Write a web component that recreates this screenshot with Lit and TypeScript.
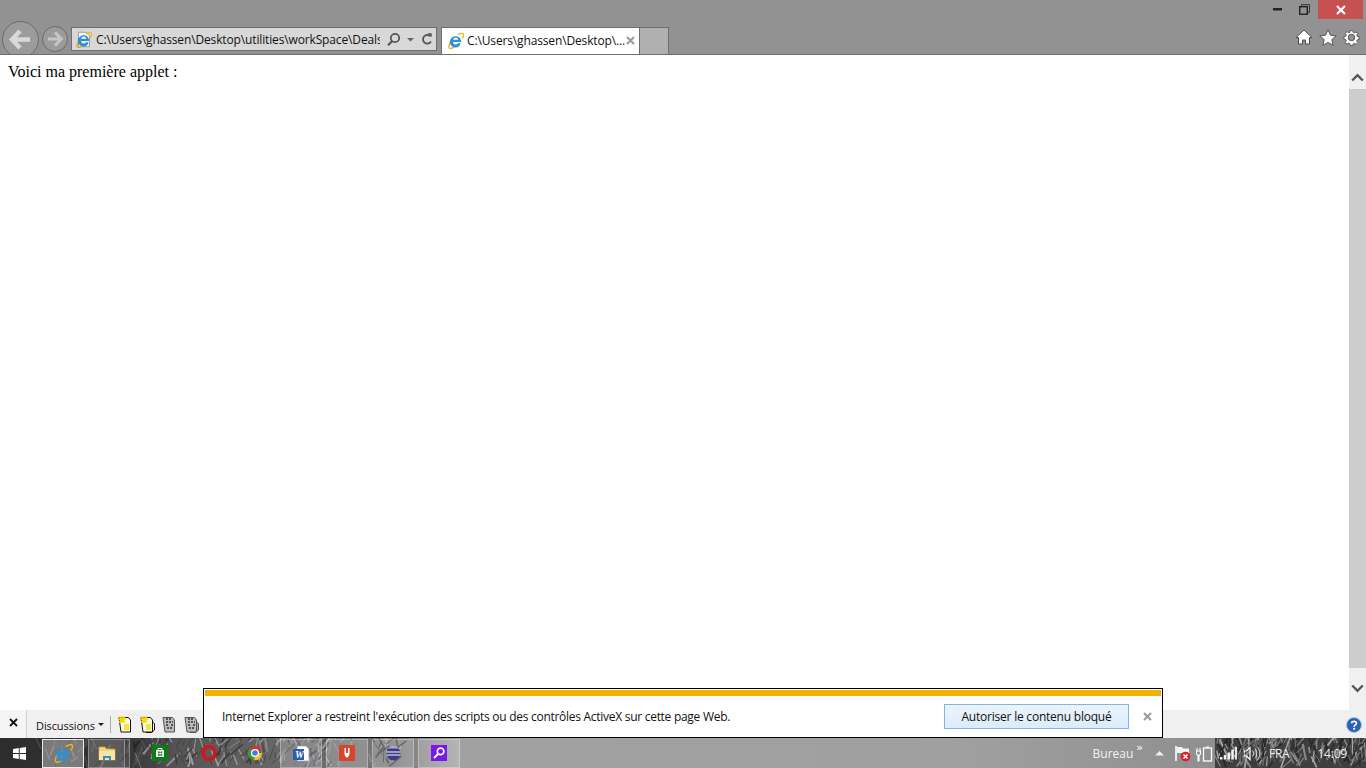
import { LitElement, html, css, svg } from "lit";
import { customElement } from "lit/decorators.js";

const ieLogo = (s: number, docBack = false) => html`<svg width=${s} height=${s} viewBox="0 0 20 20" class="ico">
  ${docBack ? svg`<path d="M4 1.5h9l4 4v13H4z" fill="#fff" stroke="#8a8a8a"/>` : ""}
  <path d="M4.2 11.5C2 15.5 1.4 18.6 3.4 19.2c1.9.5 4.6-1 6.8-3" fill="none" stroke="#f2a81c" stroke-width="1.5"/>
  <path d="M12.6 3.4c3-1.8 6-2.5 6.8-1 .6 1.3-.2 3.2-1.6 5.1" fill="none" stroke="#f2b51c" stroke-width="1.5"/>
  <path d="M16 13.2h-3.4c-.7 1.7-3.6 1.9-4.7.5-.5-.6-.7-1.1-.7-1.9H16.6c.2-3.7-2.5-6.9-6.2-6.9-4 0-7 3-7 6.9 0 3.7 3 6.4 6.7 6.4 3 0 5.2-1.7 5.9-5zM7.3 9c.3-1.5 1.5-2.4 3-2.4s2.7 1 2.9 2.4z" fill="#2c8fd8"/>
</svg>`;

const seeded = (seed: number) => () => (seed = (seed * 16807) % 2147483647) / 2147483647;

function strokes(x0: number, x1: number, n: number, seed: number, colors: string[], maxLen: number) {
  const r = seeded(seed);
  const out: unknown[] = [];
  for (let i = 0; i < n; i++) {
    const x = x0 + r() * (x1 - x0);
    const y = r() * 30;
    const a = -0.6 - r() * 1.6;
    const l = 6 + r() * maxLen;
    out.push(svg`<line x1=${x} y1=${y} x2=${x + Math.cos(a) * l} y2=${y + Math.sin(a) * l} stroke=${colors[Math.floor(r() * colors.length)]} stroke-width=${0.6 + r() * 1.4}/>`);
  }
  return out;
}

const taskTexture = html`<svg class="texture" width="1366" height="30" viewBox="0 0 1366 30">
  <defs>
    <linearGradient id="tb" x1="0" x2="1" y1="0" y2="0">
      <stop offset="0" stop-color="#2d2d2d"/>
      <stop offset="0.09" stop-color="#333"/>
      <stop offset="0.13" stop-color="#555"/>
      <stop offset="0.2" stop-color="#666"/>
      <stop offset="0.29" stop-color="#7a7a7a"/>
      <stop offset="0.335" stop-color="#a1a1a1"/>
      <stop offset="0.7" stop-color="#a0a0a0"/>
      <stop offset="0.89" stop-color="#8f8f8f"/>
    </linearGradient>
  </defs>
  <rect width="1366" height="30" fill="url(#tb)"/>
  ${strokes(40, 140, 40, 11, ["#4a4a4a", "#555", "#222"], 14)}
  ${strokes(135, 400, 190, 29, ["#8d8d8d", "#3c3c3c", "#9c9c9c", "#4c4c4c"], 14)}
  <rect x="1215" width="151" height="30" fill="#3f3f3f"/>
  ${strokes(1217, 1366, 210, 47, ["#8a8a8a", "#6d6d6d", "#272727", "#a5a5a5"], 12)}
</svg>`;

const favDoc = (active: boolean, badge: boolean) => html`<svg class="ico" width="18" height="18" viewBox="0 0 18 18">
  ${badge ? svg`<path d="M12 5.5l4.5 3v6.5l-3 2.5H8z" fill=${active ? "#fff" : "#aaa"} stroke=${active ? "#111" : "#555"}/>` : ""}
  <path d="M3 2.5h9.5l2 2.5v12H5z" fill=${active ? "#fffbd8" : "#bbb"} stroke=${active ? "#111" : "#555"}/>
  ${active
    ? svg`<path d="M6 1v7M2 4.5l8 0M3 1.5l6 6M9 1.5l-6 6" stroke="#f4d900" stroke-width="1.4"/><path d="M8 9h5v6H8z" fill="#f6e340"/>`
    : svg`<path d="M6 4h6M6 7h7M6 10h3M11 10h2M7 13h5" stroke="#333" stroke-width="1.3" stroke-dasharray="2 1"/>`}
</svg>`;

@customElement("app-root")
export class AppRoot extends LitElement {
  static styles = css`
    :host {
      display: flex;
      flex-direction: column;
      position: relative;
      width: 1366px;
      height: 768px;
      overflow: hidden;
      font-family: "Open Sans", "Noto Sans", sans-serif;
      font-size: 12px;
      color: #111;
      background: #fff;
    }
    .ico { display: block; flex: none; }

    .chrome {
      height: 55px;
      flex: none;
      background: #929292;
      border-bottom: 1px solid #6f6f6f;
      box-sizing: border-box;
      overflow: hidden;
    }
    .winrow { height: 20px; display: flex; justify-content: flex-end; padding-right: 3px; }
    .wbtn { display: flex; align-items: center; justify-content: center; width: 27px; height: 19px; }
    .wbtn.close { width: 45px; background: #c75050; margin-left: 0; }
    .navrow { display: flex; align-items: flex-start; height: 34px; }
    .back { margin: 1px 0 0 2px; }
    .forward { margin: 6px 0 0 3px; }
    .address {
      margin: 7px 0 0 3px;
      width: 366px;
      height: 24px;
      box-sizing: border-box;
      background: #d8d8d8;
      border: 1px solid #6f6f6f;
      display: flex;
      align-items: center;
      padding-left: 3px;
    }
    .addr-text {
      width: 284px;
      margin-left: 4px;
      overflow: hidden;
      white-space: nowrap;
      flex: none;
      letter-spacing: -0.14px;
    }
    .addr-tools { display: flex; align-items: center; margin-left: 6px; }
    .addr-tools svg + svg { margin-left: 2px; }
    .tab {
      margin: 7px 0 0 4px;
      width: 199px;
      height: 28px;
      box-sizing: border-box;
      background: #fff;
      border: 1px solid #6f6f6f;
      border-bottom: none;
      display: flex;
      align-items: center;
      padding: 0 4px 2px 5px;
    }
    .tab-text { margin-left: 3px; white-space: nowrap; flex: 1; letter-spacing: -0.14px; }
    .newtab {
      margin-top: 7px;
      width: 29px;
      height: 27px;
      box-sizing: border-box;
      background: #b0b0b0;
      border: 1px solid #6f6f6f;
      border-left: none;
      border-bottom: none;
    }
    .tools { margin-left: auto; display: flex; gap: 6px; padding: 9px 6px 0 0; }

    .content { flex: 1; display: flex; min-height: 0; }
    .page {
      flex: 1;
      padding: 8px;
      font-family: "Liberation Serif", serif;
      font-size: 16px;
      line-height: 18px;
      color: #000;
    }
    .scroll {
      width: 17px;
      background: #f0f0f0;
      display: flex;
      flex-direction: column;
    }
    .sbtn { height: 34px; flex: none; display: flex; align-items: center; justify-content: center; padding-top: 10px; box-sizing: border-box; }
    .sbtn.down { padding: 0 0 0 0; height: 42px; padding-bottom: 2px; }
    .thumb { flex: 1; background: #cdcdcd; }

    .favbar {
      height: 28px;
      flex: none;
      background: #f0f0f0;
      display: flex;
      align-items: center;
      position: relative;
    }
    .favclose { width: 27px; height: 28px; display: flex; align-items: center; justify-content: center; border-right: 1px solid #d0d0d0; box-sizing: border-box; padding-bottom: 3px; background: #f5f5f5; }
    .fav-label { margin-left: 9px; font-size: 11px; letter-spacing: -0.1px; padding-top: 2px; }
    .caret { width: 0; height: 0; border: 3px solid transparent; border-top: 3px solid #222; border-bottom: none; margin: 0 6px 0 3px; }
    .sep { width: 1px; height: 17px; background: #aaa; margin-right: 5px; }
    .favicons { display: flex; gap: 4px; }
    .help { margin-left: auto; margin-right: 4px; margin-top: 2px; }

    .taskbar {
      height: 30px;
      flex: none;
      position: relative;
      display: flex;
      align-items: center;
      color: #fff;
    }
    .texture { position: absolute; inset: 0; }
    .tasks { position: relative; display: flex; align-items: center; height: 30px; flex: 1; }
    .start { width: 38px; display: flex; justify-content: center; margin-right: 4px; }
    .tbtn {
      width: 42px;
      height: 29px;
      box-sizing: border-box;
      border: 1px solid rgba(255, 255, 255, 0.3);
      background: rgba(255, 255, 255, 0.2);
      display: flex;
      align-items: center;
      justify-content: center;
      margin-right: 4px;
    }
    .tbtn.active { background: rgba(255, 255, 255, 0.36); border: 1px solid rgba(255, 255, 255, 0.85); }
    .tbtn.folder { width: 37px; margin-right: 0; }
    .tbtn.stack { width: 5px; margin-right: 0; background: rgba(255, 255, 255, 0.12); border-left: none; }
    .tplain { width: 46px; display: flex; justify-content: center; flex: none; }
    .tplain.first { margin-left: 4px; width: 52px; }
    .tgap { width: 1px; }
    .tray { position: relative; display: flex; align-items: center; height: 30px; }
    .bureau { font-size: 12px; color: #f2f2f2; margin-right: 3px; }
    .chev { font-size: 11px; line-height: 10px; align-self: flex-start; margin: 5px 13px 0 0; font-family: "DejaVu Sans", sans-serif; letter-spacing: -1px; color: #fff; }
    .tray svg { margin-right: 3px; }
    .lang { margin: 0 28px 0 8px; font-size: 12px; letter-spacing: -0.3px; color: #f0f0f0; }
    .clock { margin-right: 19px; font-size: 12px; color: #f0f0f0; letter-spacing: -0.2px; }

    .notify {
      position: absolute;
      left: 203px;
      top: 688px;
      width: 960px;
      height: 50px;
      box-sizing: border-box;
      border: 1px solid #000;
      background: #fff;
      padding: 1px 1px 0 1px;
      display: flex;
      flex-direction: column;
    }
    .band { height: 6px; background: #f2b200; flex: none; }
    .nbody { flex: 1; display: flex; align-items: center; padding: 0 9px 0 17px; }
    .nmsg { flex: 1; letter-spacing: -0.28px; color: #111; }
    .nbtn {
      width: 185px;
      height: 25px;
      box-sizing: border-box;
      border: 1px solid #7eb4ea;
      background: linear-gradient(#ecf4fc, #dcecfc);
      display: flex;
      align-items: center;
      justify-content: center;
      letter-spacing: -0.22px;
      color: #111;
    }
    .nx { margin-left: 14px; }
  `;

  render() {
    const iconOutline = "#4d4d4d";
    return html`
      <div class="chrome">
        <div class="winrow">
          <div class="wbtn"><svg width="9" height="3" viewBox="0 0 9 3"><rect width="9" height="2.5" y="0" fill="#222"/></svg></div>
          <div class="wbtn"><svg width="11" height="11" viewBox="0 0 11 11"><path d="M2.5 2.5V.7h8v7.6H8.6" fill="none" stroke="#333"/><rect x=".7" y="2.7" width="7.6" height="7.6" fill="none" stroke="#222" stroke-width="1.4"/></svg></div>
          <div class="wbtn close"><svg width="10" height="10" viewBox="0 0 10 10"><path d="M1 1l8 8M9 1l-8 8" stroke="#fff" stroke-width="2.2"/></svg></div>
        </div>
        <div class="navrow">
          <svg class="ico back" width="37" height="37" viewBox="0 0 37 37">
            <circle cx="18.5" cy="18.5" r="18" fill="#9b9b9b" stroke="#6b6b6b"/>
            <path d="M18 10l-8 8.5 8 8.5M10.5 18.5H28" fill="none" stroke="#d9d9d9" stroke-width="4.4"/>
          </svg>
          <svg class="ico forward" width="26" height="26" viewBox="0 0 26 26">
            <circle cx="13" cy="13" r="12.5" fill="#9b9b9b" stroke="#6b6b6b"/>
            <path d="M13 6.5l6.3 6.5-6.3 6.5M19 13H6" fill="none" stroke="#c6c6c6" stroke-width="3"/>
          </svg>
          <div class="address">
            ${ieLogo(17, true)}
            <div class="addr-text">C:\\Users\\ghassen\\Desktop\\utilities\\workSpace\\DealsWeb\\index.html</div>
            <div class="addr-tools">
              <svg class="ico" width="15" height="15" viewBox="0 0 15 15"><circle cx="9" cy="6" r="4.2" fill="none" stroke="#555" stroke-width="1.8"/><path d="M6 9.2l-4 4" stroke="#555" stroke-width="2.2"/></svg>
              <svg class="ico" width="9" height="15" viewBox="0 0 9 15" style="margin-left:5px"><path d="M1 6h7l-3.5 3.5z" fill="#666"/></svg>
              <svg class="ico" width="14" height="14" viewBox="0 0 14 14" style="margin-left:5px"><path d="M11 9.5a4.3 4.3 0 1 1-.6-5.2" fill="none" stroke="#555" stroke-width="1.8"/><path d="M7.6 1l4 .2.2 4z" fill="#555"/></svg>
            </div>
          </div>
          <div class="tab">
            ${ieLogo(17)}
            <span class="tab-text">C:\\Users\\ghassen\\Desktop\\...</span>
            <svg class="ico" width="9" height="9" viewBox="0 0 9 9"><path d="M1 1l7 7M8 1l-7 7" stroke="#9a9a9a" stroke-width="2"/></svg>
          </div>
          <div class="newtab"></div>
          <div class="tools">
            <svg class="ico" width="18" height="16" viewBox="0 0 18 16"><path d="M9 1L1 8.5h2.5V15h4v-4h3v4h4V8.5H17z" fill="#fff" stroke=${iconOutline} stroke-width="1" stroke-linejoin="round"/></svg>
            <svg class="ico" width="18" height="17" viewBox="0 0 18 17"><path d="M9 .8l2.4 5.4 5.8.6-4.4 3.8 1.3 5.7L9 13.4l-5.1 2.9 1.3-5.7L.8 6.8l5.8-.6z" fill="#fff" stroke=${iconOutline} stroke-width=".9"/></svg>
            <svg class="ico" width="17" height="17" viewBox="0 0 17 17"><path d="M7 1h3l.4 2 1.5.7L13.700 2.500l2 2-1.200 1.800.7 1.500 2 .4v3l-2 .4-.7 1.500 1.200 1.700-2 2-1.800-1.100-1.500.6L10 18H7l-.4-2-1.500-.6-1.800 1.100-2-2 1.200-1.700-.7-1.500-2-.4v-3l2-.4.7-1.500-1.200-1.800 2-2 1.800 1.200L6.600 3z" transform="translate(1.100 .7) scale(.87)" fill="#fff" stroke=${iconOutline} stroke-width="1"/><circle cx="8.500" cy="8.500" r="3.200" fill="#929292" stroke=${iconOutline}/></svg>
          </div>
        </div>
      </div>

      <div class="content">
        <div class="page">Voici ma première applet :</div>
        <div class="scroll">
          <div class="sbtn"><svg width="13" height="9" viewBox="0 0 13 9"><path d="M1.200 7.500l5.300-5.300 5.300 5.300" fill="none" stroke="#555" stroke-width="2.400"/></svg></div>
          <div class="thumb"></div>
          <div class="sbtn down"><svg width="13" height="9" viewBox="0 0 13 9"><path d="M1.200 1.500l5.300 5.300 5.300-5.300" fill="none" stroke="#555" stroke-width="2.400"/></svg></div>
        </div>
      </div>

      <div class="favbar">
        <div class="favclose"><svg width="9" height="9" viewBox="0 0 9 9"><path d="M1 1l7 7M8 1l-7 7" stroke="#111" stroke-width="1.800"/></svg></div>
        <span class="fav-label">Discussions</span>
        <span class="caret"></span>
        <span class="sep"></span>
        <div class="favicons">
          ${favDoc(true, false)}${favDoc(true, true)}${favDoc(false, false)}${favDoc(false, true)}
        </div>
        <svg class="ico help" width="16" height="16" viewBox="0 0 16 16"><circle cx="8" cy="8" r="7.500" fill="#2a62b8" stroke="#a9c6ee"/><path d="M5.600 6.200C5.800 3.900 10.500 3.700 10.500 6.200c0 1.700-2.400 1.700-2.400 3.500" fill="none" stroke="#fff" stroke-width="1.700"/><rect x="7.200" y="10.800" width="1.900" height="1.900" fill="#fff"/></svg>
      </div>

      <div class="taskbar">
        ${taskTexture}
        <div class="tasks">
          <div class="start"><svg width="13" height="13" viewBox="0 0 13 13"><path d="M0 2l5.800-.9v5H0zM6.700 1L13 0v6.100H6.700zM0 7h5.800v5L0 11.100zM6.700 7H13v6l-6.300-1z" fill="#fff"/></svg></div>
          <div class="tbtn active">${ieLogo(20)}</div>
          <div class="tbtn folder">
            <svg class="ico" width="18" height="16" viewBox="0 0 18 16"><path d="M1 2h6l1.500 2H17v11H1z" fill="#f4d47a" stroke="#c9a23c" stroke-width=".7"/><rect x="1" y="6" width="16" height="9" fill="#f8e4a6"/><path d="M5 15v-4h8v4h-2v-2H7v2z" fill="#2c8ed0"/></svg>
          </div>
          <div class="tbtn stack"></div>
          <div class="tplain first"><svg class="ico" width="16" height="16" viewBox="0 0 16 16"><rect width="16" height="16" fill="#0b7a17"/><path d="M4 5h8v7H4z" fill="#fff"/><path d="M6 5V3.500h4V5" fill="none" stroke="#fff"/><path d="M6 6.500h1.800v1.800H6zM8.400 6.500h1.800v1.800H8.400zM6 9h1.800v1.800H6zM8.400 9h1.800v1.800H8.400z" fill="#0b7a17"/></svg></div>
          <div class="tplain"><svg class="ico" width="16" height="16" viewBox="0 0 16 16"><ellipse cx="8" cy="8" rx="5.900" ry="6.700" fill="none" stroke="#d01720" stroke-width="3.600"/></svg></div>
          <div class="tplain"><svg class="ico" width="16" height="16" viewBox="0 0 16 16"><path d="M8 8L2.800 3.200A7.200 7.200 0 0 1 14.800 5.500H8z" fill="#d8342a"/><path d="M8 8H15A7.200 7.200 0 0 1 7 15.200z" fill="#f6c21c"/><path d="M8 8L7 15.200A7.200 7.200 0 0 1 2.800 3.200z" fill="#3b9b3a"/><circle cx="8" cy="8" r="3.400" fill="#3b80d8" stroke="#fff" stroke-width="1.300"/></svg></div>
          <div class="tbtn" style="margin-left:2px"><svg class="ico" width="18" height="17" viewBox="0 0 18 17"><path d="M5 1h9l3 3v12H5z" fill="#fff" stroke="#8a9fc5" stroke-width=".7"/><rect x="1" y="4" width="11" height="11" fill="#2f5ea8"/><text x="3" y="13" font-family="Liberation Serif, serif" font-size="10" font-style="italic" font-weight="700" fill="#fff">W</text></svg></div>
          <div class="tbtn"><svg class="ico" width="16" height="16" viewBox="0 0 16 16"><rect width="16" height="16" fill="#d9452a"/><path d="M5.500 3v5.500c0 2 1 3 2.500 4.500 1.500-1.500 2.500-2.500 2.500-4.500V3H9v5H7V3z" fill="#fff"/></svg></div>
          <div class="tbtn"><svg class="ico" width="15" height="15" viewBox="0 0 15 15"><circle cx="7.500" cy="7.500" r="7" fill="#3a3d85"/><path d="M.5 6h14M.8 9h13.400" stroke="#fff" stroke-width="1.100"/><path d="M2 2.500a7 7 0 0 1 11 0z" fill="#b3a7d8"/></svg></div>
          <div class="tbtn"><svg class="ico" width="16" height="16" viewBox="0 0 16 16"><rect width="16" height="16" fill="#7a16f0"/><circle cx="9.600" cy="6.400" r="3.300" fill="none" stroke="#fff" stroke-width="1.700"/><path d="M7 9l-4 4" stroke="#fff" stroke-width="2"/></svg></div>
        </div>
        <div class="tray">
          <span class="bureau">Bureau</span>
          <span class="chev">»</span>
          <svg class="ico" width="9" height="6" viewBox="0 0 9 6" style="margin-right:10px"><path d="M0 5.500L4.500 1 9 5.500z" fill="#eee"/></svg>
          <svg class="ico" width="17" height="17" viewBox="0 0 17 17" style="margin-right:5px"><path d="M2 1v15" stroke="#fff" stroke-width="1.600"/><path d="M3 2h5l1 1.500h6V9H9.500L8.500 8H3z" fill="#f2f2f2"/><circle cx="11.500" cy="11.500" r="4.800" fill="#d2222a"/><path d="M9.500 9.500l4 4M13.500 9.500l-4 4" stroke="#fff" stroke-width="1.500"/></svg>
          <svg class="ico" width="17" height="17" viewBox="0 0 17 17" style="margin-right:7px"><path d="M1 3v3M4 3v3M.5 6h4v3L3 10.500V16H2v-5.500L.5 9z" fill="none" stroke="#fff" stroke-width="1.100"/><rect x="7.500" y="3" width="8" height="13" fill="none" stroke="#fff" stroke-width="1.300"/><rect x="10" y="1.500" width="3" height="1.500" fill="#fff"/></svg>
          <svg class="ico" width="17" height="14" viewBox="0 0 17 14" style="margin-right:7px"><path d="M0 11h2.500v2.500H0zM3.800 9h2.500v4.500H3.800zM7.600 6.500h2.500v7H7.600zM11.300 3.500h2.500v10h-2.500z" fill="#f4f4f4"/><path d="M15 1h2v12.500h-2z" fill="#e4e4e4"/></svg>
          <svg class="ico" width="17" height="17" viewBox="0 0 17 17" style="margin-right:0"><path d="M0 6h2.500L6 2.500v12L2.500 11H0z" fill="none" stroke="#fff" stroke-width="1.200"/><path d="M8.500 5.500c1.300 1.500 1.300 4.500 0 6M11 3.500c2.200 2.500 2.200 7.500 0 10M13.500 2c3 3.500 3 9.500 0 13" fill="none" stroke="#ddd"/></svg>
          <span class="lang">FRA</span>
          <span class="clock">14:09</span>
        </div>
      </div>

      <div class="notify">
        <div class="band"></div>
        <div class="nbody">
          <span class="nmsg">Internet Explorer a restreint l'exécution des scripts ou des contrôles ActiveX sur cette page Web.</span>
          <div class="nbtn">Autoriser le contenu bloqué</div>
          <svg class="ico nx" width="9" height="9" viewBox="0 0 9 9"><path d="M1 1l7 7M8 1l-7 7" stroke="#9a9a9a" stroke-width="2"/></svg>
        </div>
      </div>
    `;
  }
}
